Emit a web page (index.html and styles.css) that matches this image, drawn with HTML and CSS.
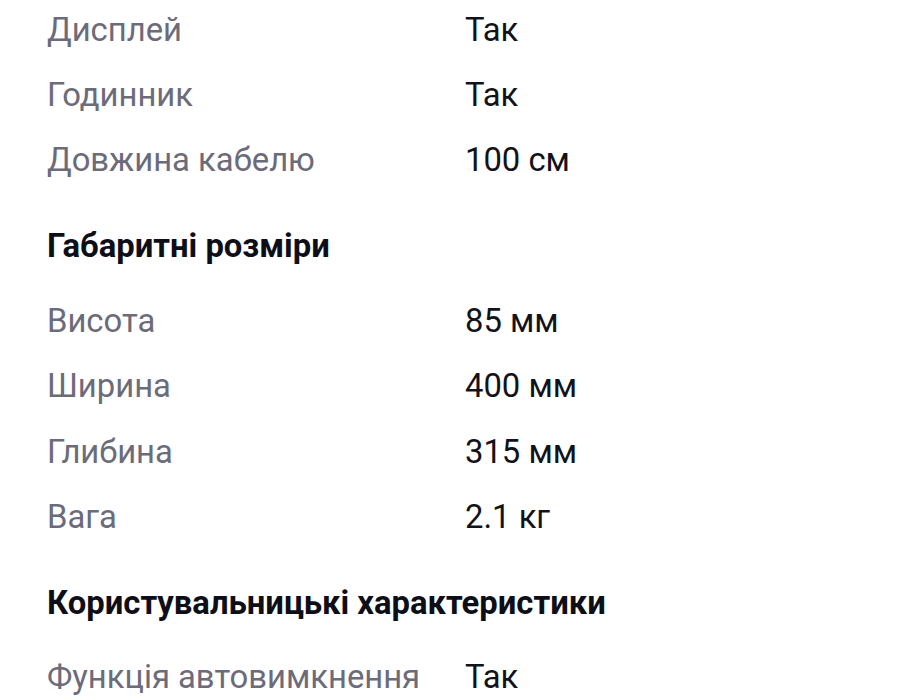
FILE: index.html
```html
<!DOCTYPE html>
<html lang="uk">
<head>
<meta charset="utf-8">
<link rel="stylesheet" href="styles.css">
</head>
<body>
<div class="specs">
  <div class="row"><span class="label">Дисплей</span><span class="value">Так</span></div>
  <div class="row"><span class="label">Годинник</span><span class="value">Так</span></div>
  <div class="row"><span class="label">Довжина кабелю</span><span class="value">100 см</span></div>
  <h2 class="group">Габаритні розміри</h2>
  <div class="row"><span class="label">Висота</span><span class="value">85 мм</span></div>
  <div class="row"><span class="label">Ширина</span><span class="value">400 мм</span></div>
  <div class="row"><span class="label">Глибина</span><span class="value">315 мм</span></div>
  <div class="row"><span class="label">Вага</span><span class="value">2.1 кг</span></div>
  <h2 class="group">Користувальницькі характеристики</h2>
  <div class="row"><span class="label">Функція автовимкнення</span><span class="value">Так</span></div>
</div>
</body>
</html>
```
FILE: styles.css
```css
html, body {
  margin: 0;
  padding: 0;
  background: #ffffff;
}
body {
  font-family: Roboto, "Noto Sans", sans-serif;
  overflow: hidden;
}
.specs {
  padding: 0 0 0 47px;
  margin-top: -3px;
}
.row {
  display: grid;
  grid-template-columns: 418px 1fr;
  height: 65.4px;
  align-items: center;
  font-size: 32.8px;
  white-space: nowrap;
}
.label {
  color: #6b6b7a;
}
.value {
  color: #12121a;
}
.group {
  margin: 0;
  height: 95px;
  display: flex;
  align-items: center;
  padding-top: 11px;
  box-sizing: border-box;
  font-size: 32.8px;
  font-weight: 700;
  color: #0e0e18;
  white-space: nowrap;
}
```
